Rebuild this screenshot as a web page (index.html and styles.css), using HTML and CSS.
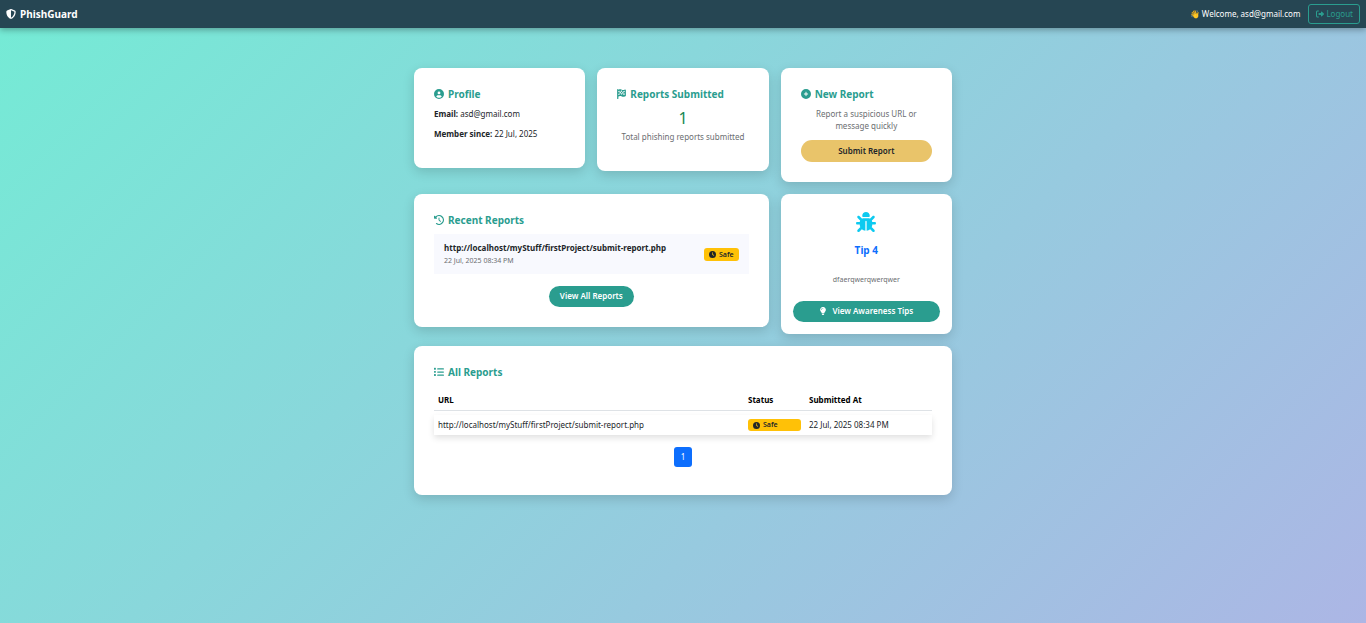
FILE: index.html
```html
<!DOCTYPE html>
<html lang="en">
<head>
<meta charset="utf-8">
<meta name="viewport" content="width=device-width, initial-scale=1">
<title>PhishGuard</title>
<link rel="stylesheet" href="styles.css">
</head>
<body>
<svg class="sprite" aria-hidden="true">
  <symbol id="clock" viewBox="0 0 512 512"><path fill-rule="evenodd" d="M256 0a256 256 0 1 1 0 512A256 256 0 1 1 256 0zM232 120V256c0 8 4 15.500 10.700 20l96 64c11 7.400 25.900 4.400 33.300-6.700s4.400-25.900-6.700-33.300L280 243.200V120c0-13.300-10.700-24-24-24s-24 10.700-24 24z"/></symbol>
</svg>
<header class="navbar">
  <a class="brand" href="#"><svg class="icon" viewBox="0 0 512 512"><path fill-rule="evenodd" d="M256 0c4.600 0 9.200 1 13.400 2.900L457.700 82.800c22 9.300 38.400 31 38.300 57.200c-.5 99.200-41.300 280.700-213.600 363.200c-16.700 8-36.100 8-52.800 0C57.300 420.700 16.500 239.200 16 140c-.1-26.200 16.300-47.900 38.300-57.200L242.700 2.900C246.800 1 251.400 0 256 0zm0 66.800V444.800C394 378 431.100 230.100 432 141.400L256 66.800z"/></svg>PhishGuard</a>
  <div class="account">
    <span>👋 Welcome, asd@gmail.com</span>
    <a class="logout" href="#"><svg class="icon" viewBox="0 0 512 512"><path d="M377.900 105.900L500.700 228.700c7.200 7.200 11.300 17.100 11.300 27.300s-4.100 20.100-11.300 27.300L377.900 406.100c-6.400 6.400-15 9.900-24 9.900c-18.700 0-33.900-15.200-33.900-33.900V320H192c-17.700 0-32-14.300-32-32v-64c0-17.700 14.300-32 32-32h128v-62.100c0-18.700 15.200-33.900 33.900-33.900c9 0 17.600 3.600 24 9.900zM160 96H96c-17.700 0-32 14.300-32 32v256c0 17.700 14.300 32 32 32h64c17.700 0 32 14.300 32 32s-14.300 32-32 32H96c-53 0-96-43-96-96V128C0 75 43 32 96 32h64c17.700 0 32 14.300 32 32s-14.300 32-32 32z"/></svg>Logout</a>
  </div>
</header>
<main class="dashboard">
  <section class="card">
    <h2 class="title"><svg class="icon" viewBox="0 0 512 512"><path fill-rule="evenodd" d="M399 384.200C376.900 345.800 335.400 320 288 320H224c-47.400 0-88.900 25.800-111 64.200c35.200 39.200 86.200 63.800 143 63.800s107.800-24.700 143-63.800zM0 256a256 256 0 1 1 512 0A256 256 0 1 1 0 256zm256 16a72 72 0 1 0 0-144 72 72 0 1 0 0 144z"/></svg>Profile</h2>
    <p><strong>Email:</strong> asd@gmail.com</p>
    <p><strong>Member since:</strong> 22 Jul, 2025</p>
  </section>
  <section class="card">
    <h2 class="title"><svg class="icon flag" viewBox="0 0 448 512"><path fill-rule="evenodd" d="M32 0c18 0 32 14 32 32l51-13c40-10 83-5 120 14c44 22 96 25 142 7l24-9c23-9 47 8 47 32v284c0 13-8 25-21 30l-35 13c-50 19-106 16-153-8c-40-20-85-25-127-14L64 380v100c0 18-14 32-32 32S0 498 0 480V32C0 14 14 0 32 0zm32 100v70l64-16V84zm64 54v70l64-9v-68c-22-1-43 2-64 7zm0 70l-64 16v72l64-16zm64-9v71c22 0 43 4 64 11v-70c-20-8-42-13-64-12zm64 12c21 7 43 10 64 9v-70c-22 1-44-3-64-10zm64 9v70c22-1 43-5 64-13v-70c-20 8-42 13-64 13zm0-70c22-1 44-5 64-13V84c-20 8-42 13-64 14zm-64-10V88c-20-8-42-12-64-11v70c22 0 43 4 64 9z"/></svg>Reports Submitted</h2>
    <p class="count">1</p>
    <p class="muted center">Total phishing reports submitted</p>
  </section>
  <section class="card">
    <h2 class="title"><svg class="icon" viewBox="0 0 512 512"><path fill-rule="evenodd" d="M256 0a256 256 0 1 0 0 512 256 256 0 1 0 0-512zM232 344V280H168c-32 0-32-48 0-48h64v-64c0-32 48-32 48 0v64h64c32 0 32 48 0 48h-64v64c0 32-48 32-48 0z"/></svg>New Report</h2>
    <p class="muted center">Report a suspicious URL or message quickly</p>
    <a class="button submit" href="#">Submit Report</a>
  </section>
  <section class="card recent">
    <h2 class="title"><svg class="icon" viewBox="0 0 512 512"><path d="M75 75L41 41C26 26 0 37 0 58v110c0 13 11 24 24 24h110c22 0 32-26 17-41l-31-31a192 192 0 1 1 26 293c-34-24-71 28-37 52A256 256 0 1 0 75 75zm181 53c-13 0-24 11-24 24v104c0 6 3 12 7 17l72 72c23 23 57-11 34-34l-65-65v-94c0-13-11-24-24-24z"/></svg>Recent Reports</h2>
    <div class="entry">
      <div><strong>http://localhost/myStuff/firstProject/submit-report.php</strong><small>22 Jul, 2025 08:34 PM</small></div>
      <span class="badge"><svg class="icon"><use href="#clock"/></svg>Safe</span>
    </div>
    <a class="button view-all" href="#">View All Reports</a>
  </section>
  <section class="card tip">
    <svg class="bug" viewBox="0 0 512 512"><path d="M256 0c53 0 96 43 96 96v3.600c0 15.700-12.700 28.400-28.400 28.400H188.400c-15.700 0-28.400-12.700-28.400-28.400V96c0-53 43-96 96-96zM41.400 105.400c12.500-12.500 32.800-12.500 45.300 0l64 64c.7.7 1.300 1.400 1.900 2.100c14.200-7.300 30.400-11.400 47.500-11.400H312c17.100 0 33.200 4.100 47.500 11.400c.6-.7 1.200-1.400 1.900-2.100l64-64c12.500-12.500 32.800-12.500 45.300 0s12.500 32.800 0 45.300l-64 64c-.7.7-1.400 1.300-2.100 1.900c6.200 12 10.100 25.300 11.100 39.500H480c17.700 0 32 14.300 32 32s-14.300 32-32 32H416c0 24.600-5.500 47.800-15.400 68.600c2.200 1.300 4.200 2.900 6 4.800l64 64c12.500 12.500 12.500 32.800 0 45.300s-32.800 12.500-45.300 0l-63.100-63.100c-24.500 21.800-55.800 36.200-90.300 39.600V240c0-8.800-7.200-16-16-16s-16 7.200-16 16V479.200c-34.500-3.400-65.800-17.800-90.300-39.600L86.600 502.600c-12.500 12.500-32.800 12.500-45.300 0s-12.500-32.800 0-45.300l64-64c1.900-1.900 3.900-3.400 6-4.800C101.500 367.800 96 344.600 96 320H32c-17.700 0-32-14.300-32-32s14.300-32 32-32H96.300c1.100-14.100 5-27.500 11.100-39.500c-.7-.6-1.400-1.200-2.100-1.900l-64-64c-12.500-12.500-12.500-32.800 0-45.300z"/></svg>
    <h2>Tip 4</h2>
    <p>dfaerqwerqwerqwer</p>
    <a class="button" href="#"><svg class="icon" viewBox="0 0 384 512"><path fill-rule="evenodd" d="M272 384c10-34 30-58 51-87a176 176 0 1 0-262 0c21 29 41 53 51 87zM192 512c44 0 80-36 80-80v-16H112v16c0 44 36 80 80 80zM112 176c0 21-32 21-32 0c0-62 50-112 112-112c21 0 21 32 0 32c-44 0-80 36-80 80z"/></svg>View Awareness Tips</a>
  </section>
  <section class="card all">
    <h2 class="title"><svg class="icon" viewBox="0 0 512 512"><path d="M24 40h48q24 0 24 24v48q0 24-24 24H24q-24 0-24-24V64q0-24 24-24zm0 160h48q24 0 24 24v48q0 24-24 24H24q-24 0-24-24v-48q0-24 24-24zm0 160h48q24 0 24 24v48q0 24-24 24H24q-24 0-24-24v-48q0-24 24-24zM192 64h288c42 0 42 64 0 64H192c-42 0-42-64 0-64zm0 160h288c42 0 42 64 0 64H192c-42 0-42-64 0-64zm0 160h288c42 0 42 64 0 64H192c-42 0-42-64 0-64z"/></svg>All Reports</h2>
    <table>
      <thead><tr><th class="url">URL</th><th class="status">Status</th><th class="date">Submitted At</th></tr></thead>
      <tbody><tr><td>http://localhost/myStuff/firstProject/submit-report.php</td><td><span class="badge"><svg class="icon"><use href="#clock"/></svg>Safe</span></td><td>22 Jul, 2025 08:34 PM</td></tr></tbody>
    </table>
    <nav class="pages" aria-label="Pages"><a href="#" aria-current="page">1</a></nav>
  </section>
</main>
</body>
</html>
```

FILE: styles.css
```css
* { box-sizing: border-box; }
body {
  margin: 0;
  min-height: 100vh;
  background: linear-gradient(135deg, #74ebd5, #acb6e5);
  color: #212529;
  font: 8px/12px "Noto Sans", sans-serif;
}
a { color: inherit; text-decoration: none; }
h2, p { margin: 0; }
strong { font-weight: 700; }
.sprite { display: none; }
.icon { width: 1em; height: 1em; fill: currentColor; flex: none; }
.navbar {
  display: flex;
  align-items: center;
  justify-content: space-between;
  height: 28px;
  padding: 0 6px;
  background: #264653;
  color: #fff;
  box-shadow: 0 2px 6px rgba(0, 0, 0, .3);
}
.brand { display: flex; align-items: center; gap: 4px; font-size: 10px; font-weight: 700; }
.account { display: flex; align-items: center; gap: 8px; }
.logout {
  display: flex;
  align-items: center;
  gap: 2px;
  height: 20px;
  padding: 0 6px 0 7px;
  border: 1px solid #2a9d8f;
  border-radius: 3px;
  color: #2a9d8f;
}
.dashboard {
  display: grid;
  grid-template-columns: repeat(3, minmax(0, 1fr));
  align-items: start;
  gap: 12px;
  max-width: 562px;
  margin: 0 auto;
  padding: 40px 12px;
}
.card {
  padding: 20px;
  border-radius: 8px;
  background: #fff;
  box-shadow: 0 4px 12px rgba(0, 0, 0, .15);
}
.card p { margin-bottom: 8px; }
.title {
  display: flex;
  align-items: center;
  gap: 4px;
  margin-bottom: 8px;
  color: #2a9d8f;
  font-size: 10px;
  line-height: 12px;
}
.flag { width: 9px; }
.card .count { margin-bottom: 3px; color: #198754; font-size: 16px; line-height: 20px; text-align: center; }
.muted, .entry small, .tip p { color: #6b6e71; }
.center { text-align: center; }
.button {
  display: flex;
  align-items: center;
  justify-content: center;
  gap: 5px;
  height: 21px;
  padding: 0 11px 1px;
  border-radius: 15px;
  background: #2a9d8f;
  color: #fff;
  font-weight: 600;
}
.submit { height: 22px; padding-bottom: 0; background: #e9c46a; color: #212529; }
.recent { grid-column: span 2; }
.entry {
  display: flex;
  align-items: center;
  justify-content: space-between;
  margin-bottom: 12px;
  padding: 8px 10px 7px;
  background: #f8f9fe;
}
.entry strong, .entry small { display: block; }
.entry small { font-size: 7px; line-height: 13px; }
.badge {
  display: flex;
  align-items: center;
  gap: 3px;
  height: 12px;
  padding: 0 5px;
  border-radius: 3px;
  background: #ffc107;
  font-size: 7px;
  font-weight: 600;
}
.entry .badge { height: 13px; }
.view-all { width: fit-content; margin: 0 auto; }
.tip { padding: 18px 12px 12px; text-align: center; }
.bug { display: block; width: 20px; height: 20px; margin: 0 auto 12px; fill: #0dcaf0; }
.tip h2 { margin-bottom: 18px; color: #0d6efd; font-size: 10px; line-height: 12px; }
.tip p { margin-bottom: 15px; font-size: 7px; }
.all { grid-column: span 3; }
table { width: 100%; border-collapse: separate; border-spacing: 0 4px; table-layout: fixed; }
thead { color: #000; }
th { padding: 4px; border-bottom: 1px solid #dee2e6; text-align: left; }
td { padding: 4px; }
.status { width: 61px; }
.date { width: 127px; }
tbody tr { box-shadow: 0 3px 6px rgba(0, 0, 0, .12); }
.pages { display: flex; justify-content: center; margin: 8px 0; }
.pages a { padding: 4px 7px; border-radius: 3px; background: #0d6efd; color: #fff; }
```
